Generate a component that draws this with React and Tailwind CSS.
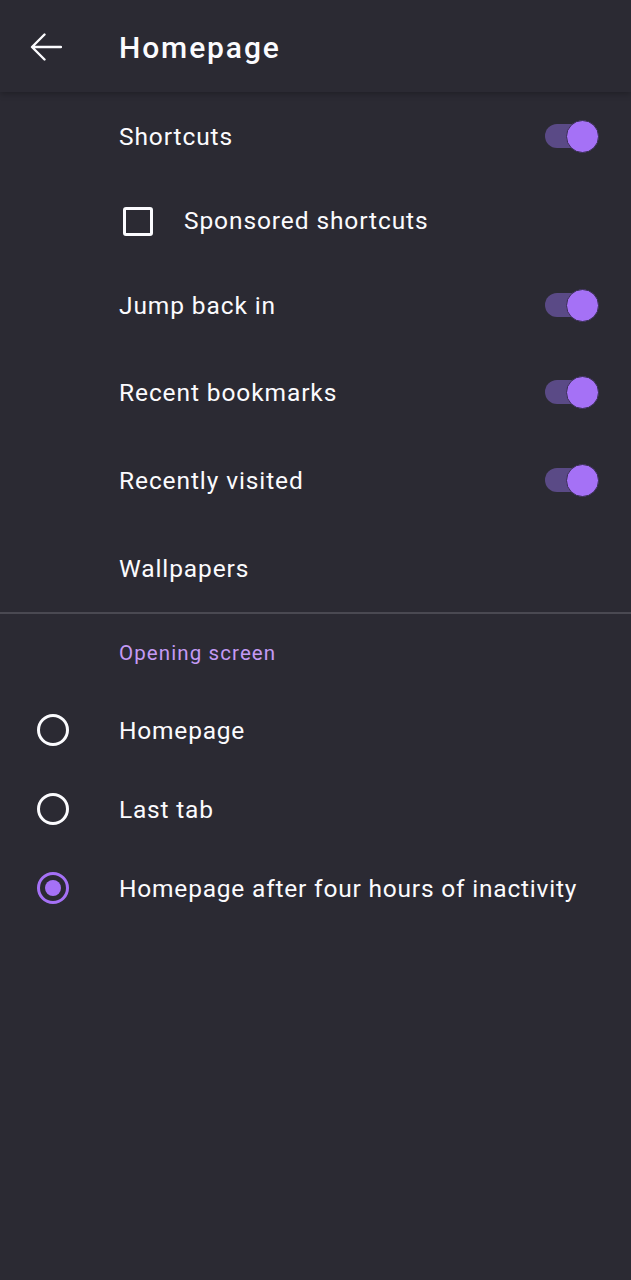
import React from 'react';

function Toggle() {
    return (
        <div className="relative w-[56px] h-[34px] flex items-center">
            <div className="ml-[2px] w-[46px] h-[24px] rounded-full bg-[#5a4a86]" />
            <div className="absolute right-0 top-[1px] w-[33px] h-[33px] rounded-full bg-[#a571f6] border border-[#3a2f55]" />
        </div>
    );
}

function ToggleRow({ label, height }) {
    return (
        <div className={`flex items-center justify-between pl-[119px] pr-[32px] ${height}`}>
            <span className="text-[24.5px] tracking-[0.9px] text-[#fbfbfe] mt-[3px]">{label}</span>
            <Toggle />
        </div>
    );
}

function Radio({ checked }) {
    if (checked) {
        return (
            <div className="w-[32px] h-[32px] rounded-full border-[3px] border-[#a571f6] flex items-center justify-center">
                <div className="w-[16px] h-[16px] rounded-full bg-[#a571f6]" />
            </div>
        );
    }
    return <div className="w-[32px] h-[32px] rounded-full border-[3px] border-[#fbfbfe]" />;
}

function RadioRow({ label, checked }) {
    return (
        <div className="flex items-center h-[79px]">
            <div className="w-[119px] flex justify-center pr-[14px] mb-[3px]">
                <Radio checked={checked} />
            </div>
            <span className="text-[24.5px] tracking-[0.8px] text-[#fbfbfe]">{label}</span>
        </div>
    );
}

export default function App() {
    return (
        <div className="w-[631px] h-[1280px] bg-[#2b2a33] font-['Roboto',sans-serif] flex flex-col">
            {/* toolbar */}
            <div className="h-[92px] flex items-center bg-[#2b2a33] shadow-[0_2px_6px_rgba(0,0,0,0.25)] relative z-10">
                <div className="w-[119px] flex items-center pl-[30px] mt-[1px]">
                    <svg width="32" height="28" viewBox="0 0 32 28" fill="none">
                        <path d="M31 14H2.5M14.5 1.5 2 14l12.5 12.5" stroke="#fbfbfe" strokeWidth="2.4" strokeLinecap="round" strokeLinejoin="round" />
                    </svg>
                </div>
                <span className="text-[30px] tracking-[1.9px] font-medium text-[#fbfbfe] mt-[3px]">Homepage</span>
            </div>

            <ToggleRow label="Shortcuts" height="h-[88px]" />
            <div className="flex items-center h-[82px] pl-[123px]">
                <div className="w-[30px] h-[29px] border-[3px] border-[#fbfbfe] rounded-[3px]" />
                <span className="ml-[31px] text-[24.5px] tracking-[0.9px] text-[#fbfbfe] mt-[1px]">Sponsored shortcuts</span>
            </div>
            <ToggleRow label="Jump back in" height="h-[86px]" />
            <ToggleRow label="Recent bookmarks" height="h-[88px]" />
            <ToggleRow label="Recently visited" height="h-[88px]" />
            <div className="flex items-center h-[88px] pl-[119px]">
                <span className="text-[24.5px] tracking-[0.9px] text-[#fbfbfe] mt-[2px]">Wallpapers</span>
            </div>

            <div className="h-[2px] bg-[#4a4952]" />

            <div className="flex items-center h-[78px] pl-[119px]">
                <span className="text-[20.5px] tracking-[1.1px] text-[#c49af5]">Opening screen</span>
            </div>
            <RadioRow label="Homepage" />
            <RadioRow label="Last tab" />
            <RadioRow label="Homepage after four hours of inactivity" checked />
        </div>
    );
}
